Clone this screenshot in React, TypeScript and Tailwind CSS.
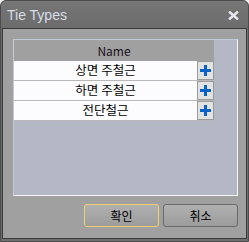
import React from "react";

const rows = ["상면 주철근", "하면 주철근", "전단철근"];

function Plus() {
  return (
    <svg width="11" height="11" viewBox="0 0 11 11">
      <rect x="4" y="0" width="3" height="11" fill="#0a62c4" />
      <rect x="0" y="4" width="11" height="3" fill="#0a62c4" />
    </svg>
  );
}

export default function App() {
  const kr = { fontFamily: '"Noto Sans CJK KR", "Noto Sans", sans-serif' };
  return (
    <div className="w-[249px] h-[242px] bg-[#f0f0f0]">
      <div className="w-[249px] h-[242px] rounded-t-[6px] border border-[#4c4c4c] bg-[#6e6e6e] flex flex-col">
        <div className="h-[27px] flex items-center justify-between pl-[6px] pr-[9px] bg-gradient-to-b from-[#767676] to-[#6c6c6c] rounded-t-[6px]">
          <span className="text-[14px] text-[#d6dde6] mt-[2px]" style={{ fontFamily: '"Liberation Sans", sans-serif' }}>
            Tie Types
          </span>
          <svg width="11" height="9" viewBox="0 0 11 9" className="mt-[2px]">
            <path d="M1 0.5 L10 8.5 M10 0.5 L1 8.5" stroke="#e4e8ee" strokeWidth="2.4" />
          </svg>
        </div>
        <div className="flex-1 mx-[1px] mb-[2px] border border-[#3a3a3a] bg-[#a0a0a0] flex flex-col pt-[10px] pl-[10px] pr-[8px] pb-[9px]">
          <div className="h-[157px] border border-[#c4cad8] border-r-[#f4f4f4] border-b-[#f4f4f4] bg-[#b4b8c4] flex flex-col">
            <div className="flex h-[21px]">
              <div className="w-[200px] bg-[#a0a0a0] flex items-center justify-center text-[12px] text-[#1a1020]" style={kr}>
                Name
              </div>
            </div>
            {rows.map((r) => (
              <div key={r} className="flex h-[20px] w-[200px] border-b border-[#b8b8b8]">
                <div className="w-[183px] bg-[#fcfcff] flex items-center justify-center text-[12.5px] text-black" style={kr}>
                  {r}
                </div>
                <div className="w-[17px] bg-[#e2e2e2] border border-[#9a9a9a] flex items-center justify-center">
                  <Plus />
                </div>
              </div>
            ))}
          </div>
          <div className="flex justify-end gap-[4px] mt-[8px]">
            <button className="w-[75px] h-[23px] rounded-[3px] border border-[#f0d070] bg-gradient-to-b from-[#b0b0b0] to-[#9c9c9c] text-[12px] text-black flex items-center justify-center" style={kr}>
              확인
            </button>
            <button className="w-[75px] h-[23px] rounded-[3px] border border-[#6a6a6a] bg-gradient-to-b from-[#b0b0b0] to-[#9c9c9c] text-[12px] text-black flex items-center justify-center" style={kr}>
              취소
            </button>
          </div>
        </div>
      </div>
    </div>
  );
}
